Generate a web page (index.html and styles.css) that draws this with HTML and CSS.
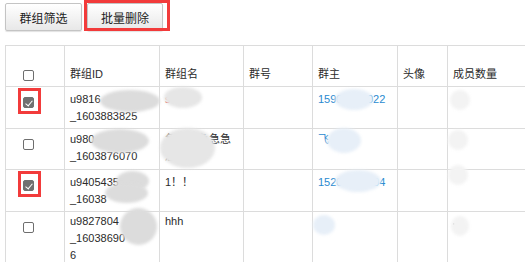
FILE: index.html
```html
<!DOCTYPE html>
<html lang="zh-CN">
<head>
<meta charset="utf-8">
<title>群组管理</title>
<link rel="stylesheet" href="styles.css">
</head>
<body>
<div class="page">
  <div class="toolbar">
    <button class="btn">群组筛选</button>
    <button class="btn btn-mark">批量删除</button>
  </div>
  <div class="table-wrap">
    <table class="grid">
      <colgroup>
        <col class="c1"><col class="c2"><col class="c3"><col class="c4"><col class="c5"><col class="c6"><col class="c7">
      </colgroup>
      <thead>
        <tr>
          <th class="cbcell"><input type="checkbox" class="cb"></th>
          <th>群组ID</th>
          <th>群组名</th>
          <th>群号</th>
          <th>群主</th>
          <th>头像</th>
          <th>成员数量</th>
        </tr>
      </thead>
      <tbody>
        <tr class="r1">
          <td class="cbcell"><span class="mark"></span><input type="checkbox" class="cb" checked></td>
          <td>u9816<br>_1603883825</td>
          <td><span class="red">s</span></td>
          <td></td>
          <td><span class="link">15900000022</span></td>
          <td></td>
          <td></td>
        </tr>
        <tr class="r2">
          <td class="cbcell"><input type="checkbox" class="cb"></td>
          <td>u980<br>_1603876070</td>
          <td>急急急急急急<br>急、</td>
          <td></td>
          <td><span class="link">飞</span></td>
          <td></td>
          <td></td>
        </tr>
        <tr class="r3">
          <td class="cbcell"><span class="mark"></span><input type="checkbox" class="cb" checked></td>
          <td>u9405435<br>_16038</td>
          <td>1！！</td>
          <td></td>
          <td><span class="link">15200000004</span></td>
          <td></td>
          <td></td>
        </tr>
        <tr class="r4">
          <td class="cbcell"><input type="checkbox" class="cb"></td>
          <td>u9827804<br>_16038690<br>6</td>
          <td>hhh</td>
          <td></td>
          <td></td>
          <td></td>
          <td><span class="dot"></span></td>
        </tr>
      </tbody>
    </table>
    <span class="blob g" style="left:95px;top:45px;width:60px;height:22px"></span>
    <span class="blob g2" style="left:159px;top:42px;width:38px;height:21px"></span>
    <span class="blob b" style="left:330px;top:44px;width:38px;height:21px"></span>
    <span class="blob w" style="left:445px;top:45px;width:20px;height:20px"></span>
    <span class="blob g" style="left:86px;top:84px;width:58px;height:24px"></span>
    <span class="blob g2" style="left:155px;top:83px;width:55px;height:40px"></span>
    <span class="blob b" style="left:322px;top:83px;width:34px;height:25px"></span>
    <span class="blob w" style="left:443px;top:85px;width:20px;height:20px"></span>
    <span class="blob g" style="left:111px;top:126px;width:33px;height:20px"></span>
    <span class="blob g" style="left:100px;top:138px;width:43px;height:20px"></span>
    <span class="blob b" style="left:330px;top:125px;width:46px;height:22px"></span>
    <span class="blob w" style="left:443px;top:120px;width:20px;height:20px"></span>
    <span class="blob g" style="left:115px;top:163px;width:37px;height:37px"></span>
    <span class="blob b" style="left:308px;top:170px;width:22px;height:20px"></span>
    <span class="blob w" style="left:446px;top:171px;width:18px;height:20px"></span>
  </div>
</div>
</body>
</html>
```
FILE: styles.css
```css
html, body {
  margin: 0;
  padding: 0;
  background: #fff;
}
body {
  font-family: "Liberation Sans", "Noto Sans CJK SC", sans-serif;
  color: #333;
  overflow: hidden;
}
.page {
  padding: 3px 0 0 5px;
}
.toolbar {
  display: flex;
  gap: 5px;
  height: 28px;
}
.btn {
  position: relative;
  width: 77px;
  height: 28px;
  margin: 0;
  padding: 0;
  border: 1px solid #c4c4c4;
  border-radius: 2px;
  background: linear-gradient(#ffffff, #e8e8e8);
  box-shadow: 0 1px 1px rgba(0,0,0,0.12);
  font-family: "Liberation Sans", "Noto Sans CJK SC", sans-serif;
  font-size: 12px;
  color: #222;
}
.btn-mark {
  width: 76px;
}
.btn-mark::after {
  content: "";
  position: absolute;
  left: -4px;
  top: -4px;
  right: -8px;
  bottom: -1px;
  border: 3px solid #f23b3b;
}
.table-wrap {
  position: relative;
  margin-top: 14px;
  width: 640px;
}
.grid {
  border-collapse: collapse;
  table-layout: fixed;
  width: 640px;
  font-size: 11px;
  line-height: 17px;
  color: #2b2b2b;
}
.c1 { width: 59px; }
.c2 { width: 95px; }
.c3 { width: 84px; }
.c4 { width: 69px; }
.c5 { width: 85px; }
.c6 { width: 50px; }
.c7 { width: 198px; }
.grid th, .grid td {
  border: 1px solid #dcdcdc;
  padding: 3px 5px;
  text-align: left;
  font-weight: normal;
  vertical-align: top;
  white-space: nowrap;
  overflow: hidden;
}
.grid thead tr { height: 41px; }
.grid tbody tr { height: 41px; }
.grid th {
  vertical-align: bottom;
  padding-bottom: 3px;
}
.grid th.cbcell { padding: 0 0 5px 17px; }
.grid td.cbcell {
  position: relative;
  padding: 10px 0 0 17px;
  overflow: visible;
}
.r1 td { padding-top: 4px; }
.r2 td { padding-top: 2px; }
.r3 td { padding-top: 4px; }
.r4 td { padding-top: 1px; }
.cb {
  -webkit-appearance: none;
  appearance: none;
  display: block;
  position: relative;
  width: 11px;
  height: 11px;
  margin: 0;
  border: 1px solid #6e6e6e;
  border-radius: 2px;
  background: #fff;
}
.cb:checked {
  background: #707070;
  border-color: #707070;
}
.cb:checked::after {
  content: "";
  position: absolute;
  left: 3px;
  top: 1px;
  width: 3px;
  height: 6px;
  border: solid #fff;
  border-width: 0 1.5px 1.5px 0;
  transform: rotate(40deg);
}
.mark {
  position: absolute;
  left: 12px;
  top: 1px;
  width: 23px;
  height: 26px;
  box-sizing: border-box;
  border: 3px solid #f23b3b;
}
.link { color: #2a8ad0; }
.red { color: #d33; }
.dot {
  display: inline-block;
  width: 2px;
  height: 2px;
  margin-top: 9px;
  background: #555;
}
.blob {
  position: absolute;
  border-radius: 50%;
  filter: blur(1.5px);
}
.blob.g { background: #dcdcdc; }
.blob.g2 { background: #e6e6e6; }
.blob.b { background: #e7eff8; }
.blob.w { background: #f3f3f3; }
```
